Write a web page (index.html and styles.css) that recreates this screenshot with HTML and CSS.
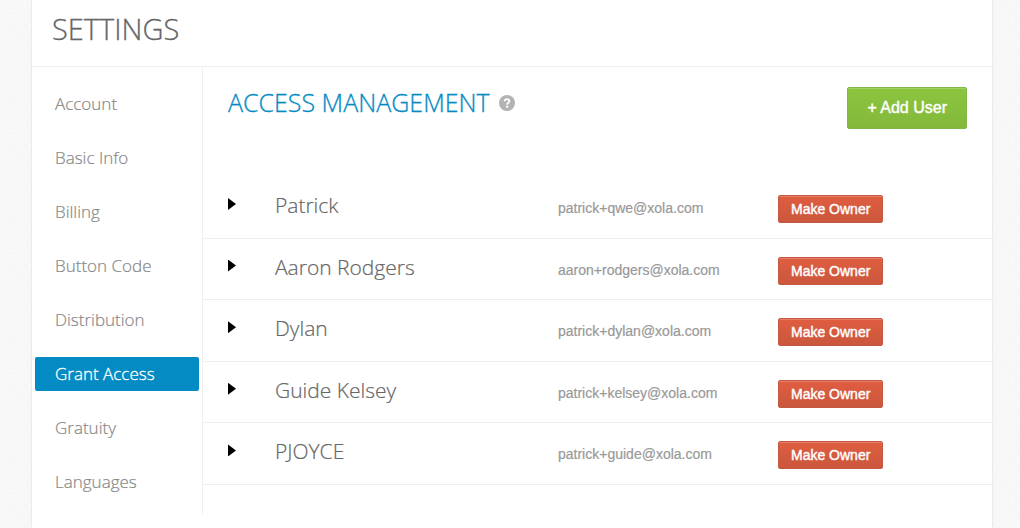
FILE: index.html
```html
<!DOCTYPE html>
<html lang="en">
<head>
<meta charset="utf-8">
<title>Settings</title>
<link rel="stylesheet" href="styles.css">
</head>
<body>
<div class="page">
  <header class="page-header"><h1 class="page-title">SETTINGS</h1></header>
  <div class="columns">
    <nav class="side-nav" aria-label="Settings">
      <a class="nav-link" href="#account">Account</a>
      <a class="nav-link" href="#basic">Basic Info</a>
      <a class="nav-link" href="#billing">Billing</a>
      <a class="nav-link" href="#button">Button Code</a>
      <a class="nav-link" href="#distribution">Distribution</a>
      <a class="nav-link nav-link-active" href="#access" aria-current="page">Grant Access</a>
      <a class="nav-link" href="#gratuity">Gratuity</a>
      <a class="nav-link" href="#languages">Languages</a>
    </nav>
    <main class="content">
      <div class="content-header">
        <h2 class="section-title">ACCESS MANAGEMENT</h2>
        <button class="help" type="button" aria-label="Help">
          <svg width="16" height="16" viewBox="0 0 16 16" aria-hidden="true"><circle cx="8" cy="8" r="8" fill="#b3b3b3"/><path d="M5.7 6.2C5.8 3.5 10.4 3.5 10.4 6.1C10.4 7.7 8.2 7.8 8.1 9.6" fill="none" stroke="#fff" stroke-width="1.9"/><rect x="7.1" y="10.7" width="2" height="2" fill="#fff"/></svg>
        </button>
        <button class="button button-add" type="button">+ Add User</button>
      </div>
      <table class="users">
        <tbody>
          <tr><td class="cell-toggle"><button class="toggle" type="button" aria-label="Expand Patrick"></button></td><td class="cell-name">Patrick</td><td class="cell-email">patrick+qwe@xola.com</td><td class="cell-action"><button class="button button-owner" type="button">Make Owner</button></td></tr>
          <tr><td class="cell-toggle"><button class="toggle" type="button" aria-label="Expand Aaron Rodgers"></button></td><td class="cell-name">Aaron Rodgers</td><td class="cell-email">aaron+rodgers@xola.com</td><td class="cell-action"><button class="button button-owner" type="button">Make Owner</button></td></tr>
          <tr><td class="cell-toggle"><button class="toggle" type="button" aria-label="Expand Dylan"></button></td><td class="cell-name">Dylan</td><td class="cell-email">patrick+dylan@xola.com</td><td class="cell-action"><button class="button button-owner" type="button">Make Owner</button></td></tr>
          <tr><td class="cell-toggle"><button class="toggle" type="button" aria-label="Expand Guide Kelsey"></button></td><td class="cell-name">Guide Kelsey</td><td class="cell-email">patrick+kelsey@xola.com</td><td class="cell-action"><button class="button button-owner" type="button">Make Owner</button></td></tr>
          <tr><td class="cell-toggle"><button class="toggle" type="button" aria-label="Expand PJOYCE"></button></td><td class="cell-name">PJOYCE</td><td class="cell-email">patrick+guide@xola.com</td><td class="cell-action"><button class="button button-owner" type="button">Make Owner</button></td></tr>
        </tbody>
      </table>
    </main>
  </div>
</div>
</body>
</html>
```
FILE: styles.css
```css
* { box-sizing: border-box; }
body {
  margin: 0;
  padding: 0 28px 0 32px;
  background: #fafafa url("data:image/svg+xml,%3Csvg xmlns='http://www.w3.org/2000/svg' width='120' height='120'%3E%3Cfilter id='n'%3E%3CfeTurbulence type='fractalNoise' baseFrequency='.7' numOctaves='2' stitchTiles='stitch'/%3E%3CfeColorMatrix values='0 0 0 0 0 0 0 0 0 0 0 0 0 0 0 .05 0 0 0 -.015'/%3E%3C/filter%3E%3Crect width='120' height='120' filter='url(%23n)'/%3E%3C/svg%3E");
  font-family: "Open Sans", sans-serif;
  color: #666;
}
.page {
  min-height: 100vh;
  background: #fff;
  box-shadow: 0 0 2px rgba(0, 0, 0, .15);
}
.page-header {
  padding: 9px 20px 17px;
  border-bottom: 1px solid #efefef;
}
.page-title {
  margin: 0;
  font: 300 29px/40px "Open Sans", sans-serif;
  -webkit-text-stroke: .3px #666;
}
.columns {
  display: flex;
  align-items: flex-start;
}
.side-nav {
  flex: 0 0 170px;
  display: flex;
  flex-direction: column;
  gap: 20px;
  padding: 20px 3px 15px;
}
.nav-link {
  padding: 0 20px;
  border-radius: 2px;
  font: 300 17px/34px "Open Sans", sans-serif;
  color: #888;
  -webkit-text-stroke: .2px #888;
  text-decoration: none;
}
.nav-link-active {
  background: #058bc3;
  color: #fff;
  -webkit-text-stroke: .3px #fff;
}
.content {
  flex: 1;
  align-self: stretch;
  min-width: 0;
  border-left: 1px solid #efefef;
}
.content-header {
  display: flex;
  align-items: flex-start;
  padding: 20px 25px 48px;
}
.section-title {
  margin: 0;
  font: 300 25px/30px "Open Sans", sans-serif;
  color: #058bc3;
  -webkit-text-stroke: .3px #058bc3;
}
.help {
  display: block;
  margin: 8px auto 0 9px;
  padding: 0;
  border: 0;
  background: none;
  line-height: 0;
}
.button {
  border: 1px solid;
  border-radius: 2px;
  font-family: "Liberation Sans", Arial, sans-serif;
  color: #fff;
  box-shadow: inset 0 1px rgba(255, 255, 255, .2);
  -webkit-text-stroke: .4px #fff;
}
.button-add {
  padding: 0 19px;
  font-size: 16px;
  line-height: 40px;
  border-color: #83b544;
  background: linear-gradient(#8bc63f, #84b83b);
}
.button-owner {
  display: block;
  padding: 0 12px;
  font-size: 14px;
  line-height: 26px;
  border-color: #c55a43;
  background: linear-gradient(#e05d41, #ca573c);
}
.users {
  width: 100%;
  height: 308px;
  table-layout: fixed;
  border-collapse: separate;
  border-spacing: 0;
}
.users td {
  padding: 0;
  vertical-align: top;
  border-bottom: 1px solid #efefef;
}
.users .cell-toggle {
  width: 72px;
  padding: 21px 0 0 25px;
}
.toggle {
  display: block;
  width: 8px;
  height: 12px;
  padding: 0;
  border: 0;
  background: #000;
  clip-path: polygon(0 0, 100% 50%, 0 100%);
}
.users .cell-name {
  padding-top: 13px;
  font: 300 21px/30px "Open Sans", sans-serif;
  -webkit-text-stroke: .2px #666;
}
.users .cell-email {
  width: 220px;
  padding-top: 21px;
  font: 14px/20px "Liberation Sans", Arial, sans-serif;
  color: #999;
  -webkit-text-stroke: .2px #999;
}
.users .cell-action {
  width: 214px;
  padding-top: 18px;
}
```
